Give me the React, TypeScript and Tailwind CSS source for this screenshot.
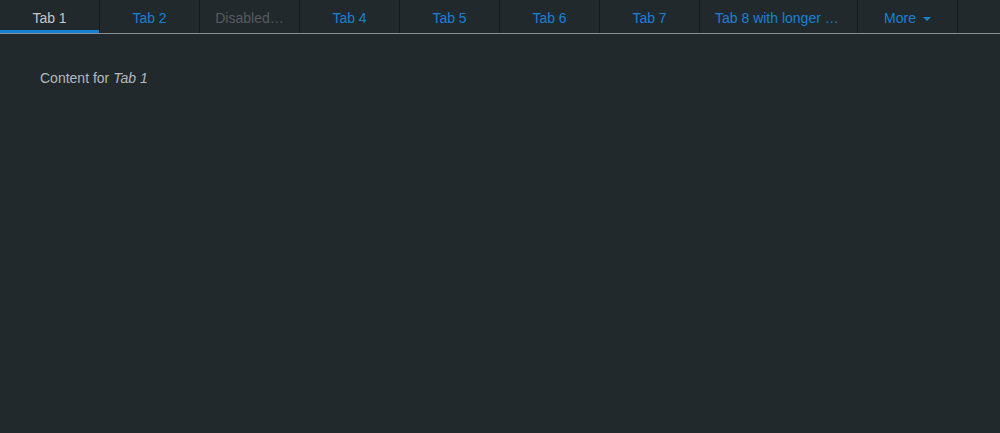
import { useState } from 'react'

const tabs = [
  { id: 'tab1', label: 'Tab 1' },
  { id: 'tab2', label: 'Tab 2' },
  { id: 'tab3', label: 'Disabled…', disabled: true },
  { id: 'tab4', label: 'Tab 4' },
  { id: 'tab5', label: 'Tab 5' },
  { id: 'tab6', label: 'Tab 6' },
  { id: 'tab7', label: 'Tab 7' },
  { id: 'tab8', label: 'Tab 8 with longer …', wide: true },
]

export default function App() {
  const [active, setActive] = useState('tab1')
  const current = tabs.find(t => t.id === active)

  return (
    <div className="min-h-screen w-full bg-[#22292d] text-[14px]" style={{ fontFamily: '"Liberation Sans", Arial, sans-serif' }}>
      <div className="flex h-[34px] border-b border-[#8a8f93]">
        {tabs.map(tab => (
          <button
            key={tab.id}
            disabled={tab.disabled}
            onClick={() => setActive(tab.id)}
            className={
              'relative flex h-full shrink-0 items-center border-r border-[#15191c] ' +
              (tab.wide ? 'w-[158px] justify-start pl-[15px] ' : 'w-[100px] justify-center px-[10px] ') +
              (tab.disabled
                ? 'text-[#545b60] cursor-default'
                : active === tab.id
                ? 'text-[#c4c7c9]'
                : 'text-[#1681d4]')
            }
          >
            <span className="block whitespace-nowrap pt-[3px]">{tab.label}</span>
            {active === tab.id && (
              <span className="absolute bottom-0 left-0 right-0 h-[3px] bg-[#1681d4]" />
            )}
          </button>
        ))}
        <button className="flex h-full w-[100px] shrink-0 items-center justify-center gap-[7px] border-r border-[#15191c] text-[#1681d4]">
          <span className="pt-[3px]">More</span>
          <svg width="8" height="4" viewBox="0 0 8 4" className="mt-[5px]">
            <path d="M0 0h8L4 4z" fill="currentColor" />
          </svg>
        </button>
      </div>
      <div className="px-10 pt-[34px] text-[#b4b8bb]">
        Content for <em>{current?.label}</em>
      </div>
    </div>
  )
}
